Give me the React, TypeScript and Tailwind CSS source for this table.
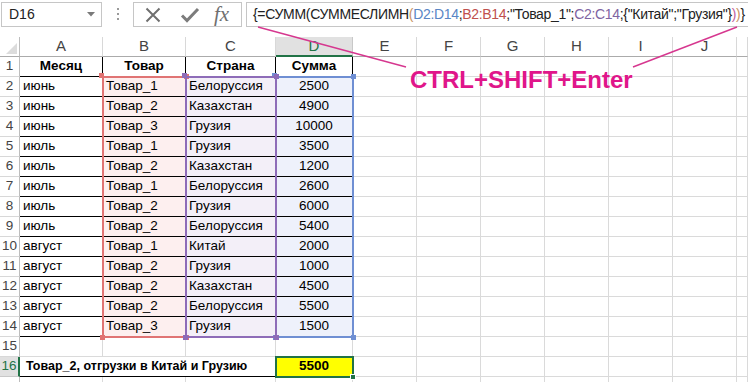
import React from "react";

type Row = [string, string, string, string];

const rows: Row[] = [
  ["июнь", "Товар_1", "Белоруссия", "2500"],
  ["июнь", "Товар_2", "Казахстан", "4900"],
  ["июнь", "Товар_3", "Грузия", "10000"],
  ["июль", "Товар_1", "Грузия", "3500"],
  ["июль", "Товар_2", "Казахстан", "1200"],
  ["июль", "Товар_1", "Белоруссия", "2600"],
  ["июль", "Товар_2", "Грузия", "6000"],
  ["июль", "Товар_2", "Белоруссия", "5400"],
  ["август", "Товар_1", "Китай", "2000"],
  ["август", "Товар_2", "Грузия", "1000"],
  ["август", "Товар_2", "Казахстан", "4500"],
  ["август", "Товар_2", "Белоруссия", "5500"],
  ["август", "Товар_3", "Грузия", "1500"],
];

const letters = ["A", "B", "C", "D", "E", "F", "G", "H", "I", "J", ""];

function RowHead({ n, active }: { n?: number; active?: boolean }) {
  return (
    <div
      className={
        active
          ? "flex items-center justify-center border-b border-r-2 border-b-[#c8c8c8] border-r-[#217346] bg-[#e1e1e1] text-[#217346]"
          : "flex items-center justify-center border-b border-r border-b-[#d8d8d8] border-r-[#bdbdbd] text-[#444]"
      }
    >
      {n}
    </div>
  );
}

function Blank({ n }: { n: number }) {
  return (
    <>
      {Array.from({ length: n }).map((_, i) => (
        <div key={i} className="border-b border-r border-[#dadada]" />
      ))}
    </>
  );
}

function Range({ box, color, dot }: { box: string; color: string; dot: string }) {
  return (
    <div className={`pointer-events-none absolute ${box}`}>
      <div className={`absolute inset-0 border-2 ${color}`} />
      <span className={`absolute -left-[3px] -top-[3px] size-[5px] ${dot}`} />
    </div>
  );
}

function Corner({ x, y, bg }: { x: string; y: string; bg: string }) {
  return <span className={`pointer-events-none absolute size-[5px] ${x} ${y} ${bg}`} />;
}

function FormulaBar() {
  return (
    <div className="flex h-[37px] items-start pt-[2px] text-[#222]">
      <div className="ml-[1px] flex h-[25px] w-[101px] shrink-0 items-center justify-between border border-[#c6c6c6] pl-[7px] pr-[6px] text-[14px]">
        <span>D16</span>
        <svg width="8" height="5" viewBox="0 0 8 5">
          <path d="M0 0h8L4 4.5z" fill="#7a7a7a" />
        </svg>
      </div>
      <div className="flex w-[31px] shrink-0 flex-col items-center gap-[3px] pt-[6px]">
        <span className="size-[2px] bg-[#9a9a9a]" />
        <span className="size-[2px] bg-[#9a9a9a]" />
        <span className="size-[2px] bg-[#9a9a9a]" />
      </div>
      <div className="flex h-[25px] w-[109px] shrink-0 items-center border border-[#c6c6c6]">
        <svg className="ml-[10px]" width="18" height="18" viewBox="0 0 18 18">
          <path d="M2.5 2.5l13 13M15.5 2.5l-13 13" stroke="#6f6f6f" strokeWidth="2" />
        </svg>
        <svg className="ml-[18px]" width="20" height="18" viewBox="0 0 20 18">
          <path d="M2 9.5l5 5L18 3" stroke="#7c7c7c" strokeWidth="3" fill="none" />
        </svg>
        <span className="ml-[14px] font-['Liberation_Serif',serif] text-[21px] italic leading-none text-[#6f6f6f]">
          fx
        </span>
      </div>
      <div className="ml-[4px] h-[25px] w-[502px] shrink-0 overflow-hidden border border-r-0 border-[#c6c6c6] pl-[6px] text-[14px] leading-[23px] tracking-[-0.32px] whitespace-nowrap">
        {"{=СУММ(СУММЕСЛИМН"}
        <span className="text-[#c89060]">(</span>
        <span className="text-[#5a86c5]">D2:D14</span>;
        <span className="text-[#c0504d]">B2:B14</span>;"Товар_1";
        <span className="text-[#8064a2]">C2:C14</span>
        {';{"Китай";"Грузия"}'}
        <span className="text-[#c0609f]">)</span>
        <span className="text-[#c89060]">)</span>
        {"}"}
      </div>
    </div>
  );
}

export default function App() {
  return (
    <div className="relative h-[382px] w-[748px] overflow-hidden bg-white font-['Liberation_Sans',Arial,sans-serif] text-[13.5px] text-black">
      <FormulaBar />

      <div className="relative grid auto-rows-[20px] grid-cols-[20px_83px_83px_90px_77px_64px_64px_64px_64px_64px_64px_11px]">
        {/* column headers */}
        <div className="relative border-b border-r border-b-[#ababab] border-r-[#bdbdbd]">
          <svg className="absolute bottom-[2px] right-[2px]" width="11" height="11" viewBox="0 0 11 11">
            <path d="M11 0v11H0z" fill="#dcdcdc" />
          </svg>
        </div>
        {letters.map((l) =>
          l === "D" ? (
            <div
              key={l}
              className="flex items-center justify-center border-b-2 border-r border-b-[#217346] border-r-[#c8c8c8] bg-[#e1e1e1] text-[15px] text-[#217346]"
            >
              {l}
            </div>
          ) : (
            <div
              key={l || "k"}
              className="flex items-center justify-center border-b border-r border-b-[#ababab] border-r-[#d8d8d8] text-[15px] text-[#444]"
            >
              {l}
            </div>
          ),
        )}

        {/* row 1 */}
        <RowHead n={1} />
        {["Месяц", "Товар", "Страна", "Сумма"].map((h) => (
          <div key={h} className="flex items-center justify-center border-b border-r border-black font-bold">
            {h}
          </div>
        ))}
        <Blank n={7} />

        {rows.map((r, i) => (
          <React.Fragment key={i}>
            <RowHead n={i + 2} />
            <div className="flex items-center border-b border-r border-black pl-[3px]">{r[0]}</div>
            <div className="flex items-center border-b border-r border-black bg-[#fdefef] pl-[3px]">{r[1]}</div>
            <div className="flex items-center border-b border-r border-black bg-[#f3eff8] pl-[3px]">{r[2]}</div>
            <div className="flex items-center justify-center border-b border-r border-black bg-[#eef1fb]">{r[3]}</div>
            <Blank n={7} />
          </React.Fragment>
        ))}

        {/* row 15 */}
        <RowHead n={15} />
        <Blank n={11} />

        {/* row 16 */}
        <RowHead n={16} active />
        <div className="col-span-3 flex items-center border-b border-r border-black pl-[6px] text-[12.5px] font-bold whitespace-nowrap">
          Товар_2, отгрузки в Китай и Грузию
        </div>
        <div className="flex items-center justify-center border-b border-r border-black bg-[#ffff00] font-bold">
          5500
        </div>
        <Blank n={7} />

        {/* row 17, only its top shows */}
        <RowHead />
        <Blank n={11} />

        {/* range highlights */}
        <Range box="left-[275px] top-[39px] h-[262px] w-[79px]" color="border-[#6f8fd3]" dot="bg-[#6f8fd3]" />
        <Corner x="left-[351px]" y="top-[37px]" bg="bg-[#6f8fd3]" />
        <Corner x="left-[273px]" y="top-[298px]" bg="bg-[#6f8fd3]" />
        <Corner x="left-[351px]" y="top-[298px]" bg="bg-[#6f8fd3]" />

        <Range box="left-[102px] top-[39px] h-[262px] w-[85px]" color="border-[#e07474]" dot="bg-[#e07474]" />
        <Corner x="left-[184px]" y="top-[37px]" bg="bg-[#e07474]" />
        <Corner x="left-[100px]" y="top-[298px]" bg="bg-[#e07474]" />
        <Corner x="left-[184px]" y="top-[298px]" bg="bg-[#e07474]" />

        <Range box="left-[185px] top-[39px] h-[262px] w-[92px]" color="border-[#8e6cb8]" dot="bg-[#8e6cb8]" />
        <Corner x="left-[274px]" y="top-[37px]" bg="bg-[#8e6cb8]" />
        <Corner x="left-[183px]" y="top-[298px]" bg="bg-[#8e6cb8]" />
        <Corner x="left-[274px]" y="top-[298px]" bg="bg-[#8e6cb8]" />

        {/* selection D16 */}
        <div className="pointer-events-none absolute left-[275px] top-[319px] h-[22px] w-[79px] border-2 border-[#217346]" />
        <span className="pointer-events-none absolute left-[350px] top-[337px] size-[6px] border border-white bg-[#217346]" />
      </div>

      {/* annotation */}
      <svg className="pointer-events-none absolute inset-0" width="748" height="382">
        <line x1="258" y1="27" x2="406" y2="67" stroke="#d6378f" strokeWidth="1.4" />
        <line x1="737" y1="27" x2="633" y2="67" stroke="#d6378f" strokeWidth="1.4" />
      </svg>
      <div className="pointer-events-none absolute left-[410px] top-[68px] text-[24px] leading-none font-bold whitespace-nowrap text-[#e0168a]">
        CTRL+SHIFT+Enter
      </div>
    </div>
  );
}
